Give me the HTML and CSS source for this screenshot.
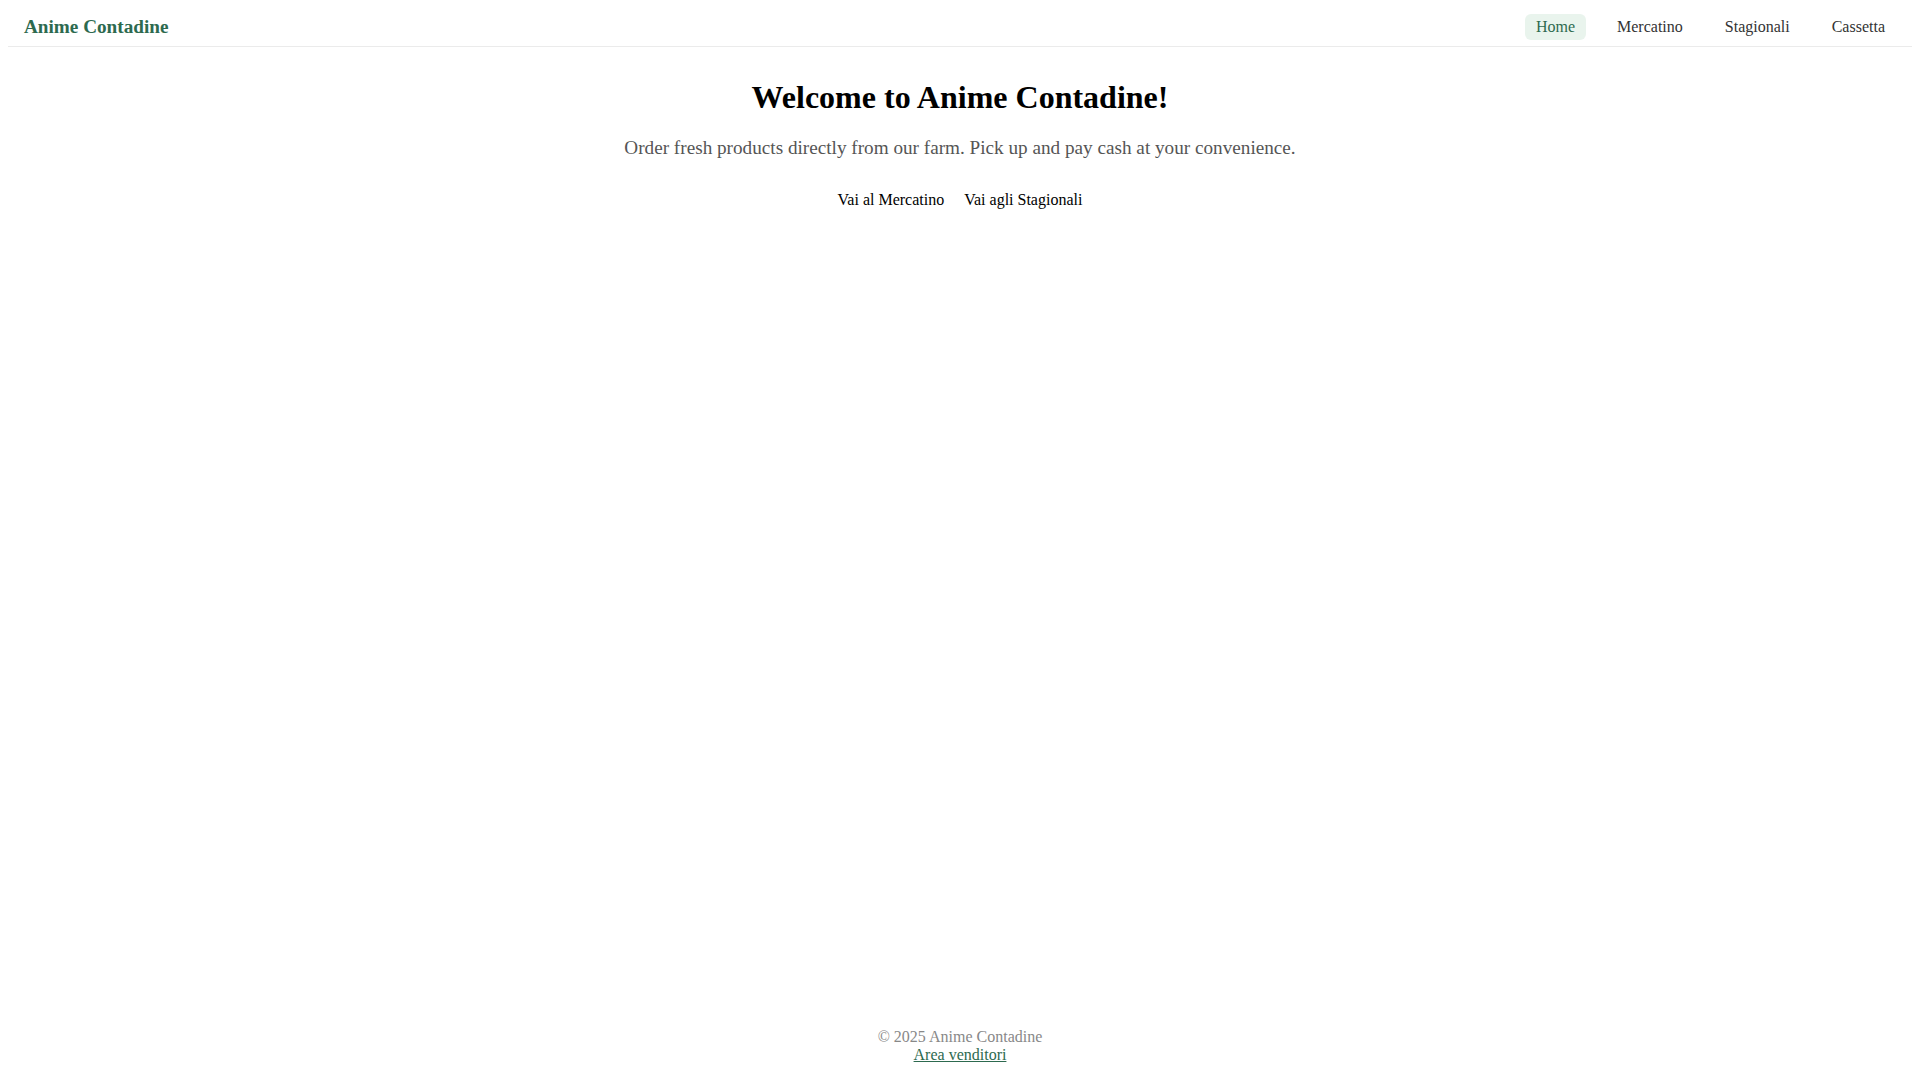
FILE: index.html
```html
<!DOCTYPE html>
<html lang="it">
<head>
<meta charset="utf-8">
<title>Anime Contadine</title>
<link rel="stylesheet" href="styles.css">
</head>
<body>
<div class="app">
  <header class="header">
    <a class="brand" href="#">Anime Contadine</a>
    <nav class="nav">
      <a class="nav-link active" href="#">Home</a>
      <a class="nav-link" href="#">Mercatino</a>
      <a class="nav-link" href="#">Stagionali</a>
      <a class="nav-link" href="#">Cassetta</a>
    </nav>
  </header>
  <main class="main">
    <h1 class="title">Welcome to Anime Contadine!</h1>
    <p class="lead">Order fresh products directly from our farm. Pick up and pay cash at your convenience.</p>
    <div class="actions">
      <a class="action" href="#">Vai al Mercatino</a>
      <a class="action" href="#">Vai agli Stagionali</a>
    </div>
  </main>
  <footer class="footer">
    <div class="copy">© 2025 Anime Contadine</div>
    <a class="vendor" href="#">Area venditori</a>
  </footer>
</div>
</body>
</html>
```

FILE: styles.css
```css
html, body {
  font-family: "Liberation Serif", "Times New Roman", serif;
  font-size: 16px;
  color: #000;
  background: #fff;
}
body {
  margin: 8px;
}
.app {
  min-height: calc(100vh - 16px);
  display: flex;
  flex-direction: column;
}
.header {
  display: flex;
  align-items: center;
  justify-content: space-between;
  padding: 6px 16px;
  border-bottom: 1px solid #ebebeb;
}
.brand {
  font-size: 19.2px;
  font-weight: bold;
  color: #2d6a4f;
  text-decoration: none;
}
.nav {
  display: flex;
  gap: 20px;
}
.nav-link {
  padding: 4px 11px;
  border-radius: 6px;
  color: #333;
  text-decoration: none;
}
.nav-link.active {
  background: #e9f4ed;
  color: #2d6a4f;
}
.main {
  flex: 1;
  text-align: center;
  padding-top: 31.5px;
}
.title {
  font-size: 32px;
  font-weight: bold;
  margin: 0 0 21.44px;
}
.lead {
  font-size: 19.2px;
  color: #555;
  margin: 0;
}
.actions {
  display: flex;
  justify-content: center;
  gap: 20px;
  margin-top: 32px;
}
.action {
  color: #000;
  text-decoration: none;
}
.footer {
  text-align: center;
  padding: 8px 0;
  color: #888;
}
.vendor {
  color: #2d6a4f;
  text-decoration: underline;
}
```
